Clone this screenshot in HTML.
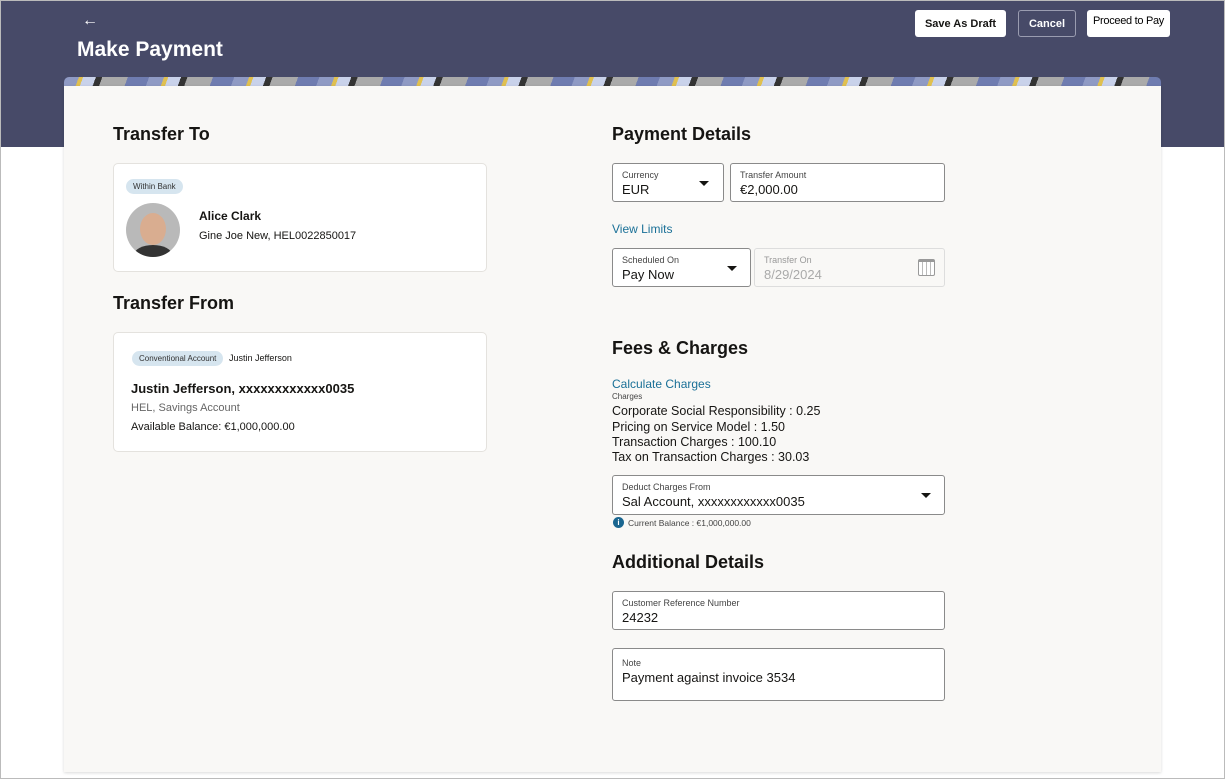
<!DOCTYPE html>
<html><head><meta charset="utf-8"><style>
*{box-sizing:border-box;margin:0;padding:0}
body{width:1225px;height:779px;overflow:hidden;background:#fff;font-family:"Liberation Sans",sans-serif;color:#161513;position:relative}
.frame{position:absolute;left:0;top:0;width:1225px;height:779px;border:1px solid #bbb;pointer-events:none;z-index:5}
.hdr{position:absolute;left:0;top:0;width:1225px;height:147px;background:#474a68}
.back{position:absolute;left:82px;top:12px;color:#fff;font-size:16px}
.title{position:absolute;left:77px;top:38px;color:#fff;font-size:21px;font-weight:bold}
.btn{position:absolute;top:10px;height:27px;font-size:11px;font-weight:bold;display:flex;align-items:center;justify-content:center;border-radius:3px}
.banner{position:absolute;left:64px;top:77px;width:1097px;height:10px;border-radius:5px 5px 0 0;background:repeating-linear-gradient(110deg,#8f9ac4 0 14px,#e0c050 14px 18px,#c9d2ea 18px 30px,#333 30px 36px,#aaa 36px 60px,#6f7cb0 60px 80px)}
.card{position:absolute;left:64px;top:86px;width:1097px;height:686px;background:#f9f8f6;box-shadow:0 1px 3px rgba(0,0,0,.15)}
h2{position:absolute;font-size:18px;font-weight:bold}
.box{position:absolute;background:#fff;border:1px solid #e4e2de;border-radius:5px}
.chip{position:absolute;background:#d6e5ef;border-radius:8px;font-size:8px;padding:3px 7px;color:#333}
.fld{position:absolute;background:#fff;border:1px solid #8a8a8a;border-radius:3px}
.fld .l{position:absolute;left:9px;top:6px;font-size:9px;color:#444}
.fld .v{position:absolute;left:9px;top:18px;font-size:13px}
.caret{position:absolute;width:0;height:0;border-left:5px solid transparent;border-right:5px solid transparent;border-top:5px solid #161513}
.link{position:absolute;color:#1a7097;font-size:12px}
.t{position:absolute;font-size:13px;white-space:nowrap}
</style></head><body>
<div class="frame"></div>
<div class="hdr"></div>
<div class="back">←</div>
<div class="title">Make Payment</div>
<div class="btn" style="left:915px;width:91px;background:#fff;color:#161513">Save As Draft</div>
<div class="btn" style="left:1018px;width:58px;border:1px solid #9a9cb0;color:#fff">Cancel</div>
<div class="btn" style="left:1087px;width:83px;background:#fff;color:#000;font-weight:normal;font-size:11px;letter-spacing:-0.3px;align-items:flex-start;padding-top:5px">Proceed to Pay</div>
<div class="banner"></div>
<div class="card"></div>

<h2 style="left:113px;top:124px">Transfer To</h2>
<div class="box" style="left:113px;top:163px;width:374px;height:109px"></div>
<div class="chip" style="left:126px;top:179px">Within Bank</div>
<div style="position:absolute;left:126px;top:203px;width:54px;height:54px;border-radius:50%;overflow:hidden;background:#b9b9b9">
<div style="position:absolute;left:14px;top:10px;width:26px;height:32px;border-radius:50%;background:#d9ad90"></div>
<div style="position:absolute;left:8px;top:42px;width:38px;height:20px;border-radius:50%;background:#333"></div></div>
<div class="t" style="left:199px;top:209px;font-weight:bold;font-size:12px">Alice Clark</div>
<div class="t" style="left:199px;top:230px;font-size:11px">Gine Joe New, HEL0022850017</div>

<h2 style="left:113px;top:293px">Transfer From</h2>
<div class="box" style="left:113px;top:332px;width:374px;height:120px"></div>
<div class="chip" style="left:132px;top:351px">Conventional Account</div>
<div class="t" style="left:229px;top:353px;font-size:9px">Justin Jefferson</div>
<div class="t" style="left:131px;top:381px;font-weight:bold;font-size:13px">Justin Jefferson, xxxxxxxxxxxx0035</div>
<div class="t" style="left:131px;top:402px;font-size:11px;color:#666">HEL, Savings Account</div>
<div class="t" style="left:131px;top:421px;font-size:11px">Available Balance: €1,000,000.00</div>

<h2 style="left:612px;top:124px">Payment Details</h2>
<div class="fld" style="left:612px;top:163px;width:112px;height:39px"><div class="l">Currency</div><div class="v">EUR</div><div class="caret" style="left:86px;top:17px"></div></div>
<div class="fld" style="left:730px;top:163px;width:215px;height:39px"><div class="l">Transfer Amount</div><div class="v">€2,000.00</div></div>
<div class="link" style="left:612px;top:222px">View Limits</div>
<div class="fld" style="left:612px;top:248px;width:139px;height:39px"><div class="l">Scheduled On</div><div class="v">Pay Now</div><div class="caret" style="left:114px;top:17px"></div></div>
<div class="fld" style="left:754px;top:248px;width:191px;height:39px;border-color:#ddd;background:#f9f8f6"><div class="l" style="color:#999">Transfer On</div><div class="v" style="color:#aaa">8/29/2024</div><div style="position:absolute;left:163px;top:10px;width:17px;height:17px;border:1.5px solid #999;border-top-width:3px;border-radius:2px;background:repeating-linear-gradient(90deg,#fff 0 3px,#bbb 3px 4px)"></div></div>

<h2 style="left:612px;top:338px">Fees &amp; Charges</h2>
<div class="link" style="left:612px;top:377px">Calculate Charges</div>
<div class="t" style="left:612px;top:392px;font-size:8px;color:#444">Charges</div>
<div class="t" style="left:612px;top:404px;font-size:12.5px">Corporate Social Responsibility : 0.25</div>
<div class="t" style="left:612px;top:420px;font-size:12.5px">Pricing on Service Model : 1.50</div>
<div class="t" style="left:612px;top:435px;font-size:12.5px">Transaction Charges : 100.10</div>
<div class="t" style="left:612px;top:450px;font-size:12.5px">Tax on Transaction Charges : 30.03</div>
<div class="fld" style="left:612px;top:475px;width:333px;height:40px"><div class="l">Deduct Charges From</div><div class="v">Sal Account, xxxxxxxxxxxx0035</div><div class="caret" style="left:308px;top:17px"></div></div>
<div style="position:absolute;left:613px;top:517px;width:11px;height:11px;border-radius:50%;background:#1a6690;color:#fff;font-size:8px;text-align:center;line-height:11px;font-weight:bold">i</div>
<div class="t" style="left:628px;top:518px;font-size:8.5px;color:#444">Current Balance : €1,000,000.00</div>

<h2 style="left:612px;top:552px">Additional Details</h2>
<div class="fld" style="left:612px;top:591px;width:333px;height:39px"><div class="l">Customer Reference Number</div><div class="v">24232</div></div>
<div class="fld" style="left:612px;top:648px;width:333px;height:53px"><div class="l" style="top:9px">Note</div><div class="v" style="top:21px">Payment against invoice 3534</div></div>
</body></html>
